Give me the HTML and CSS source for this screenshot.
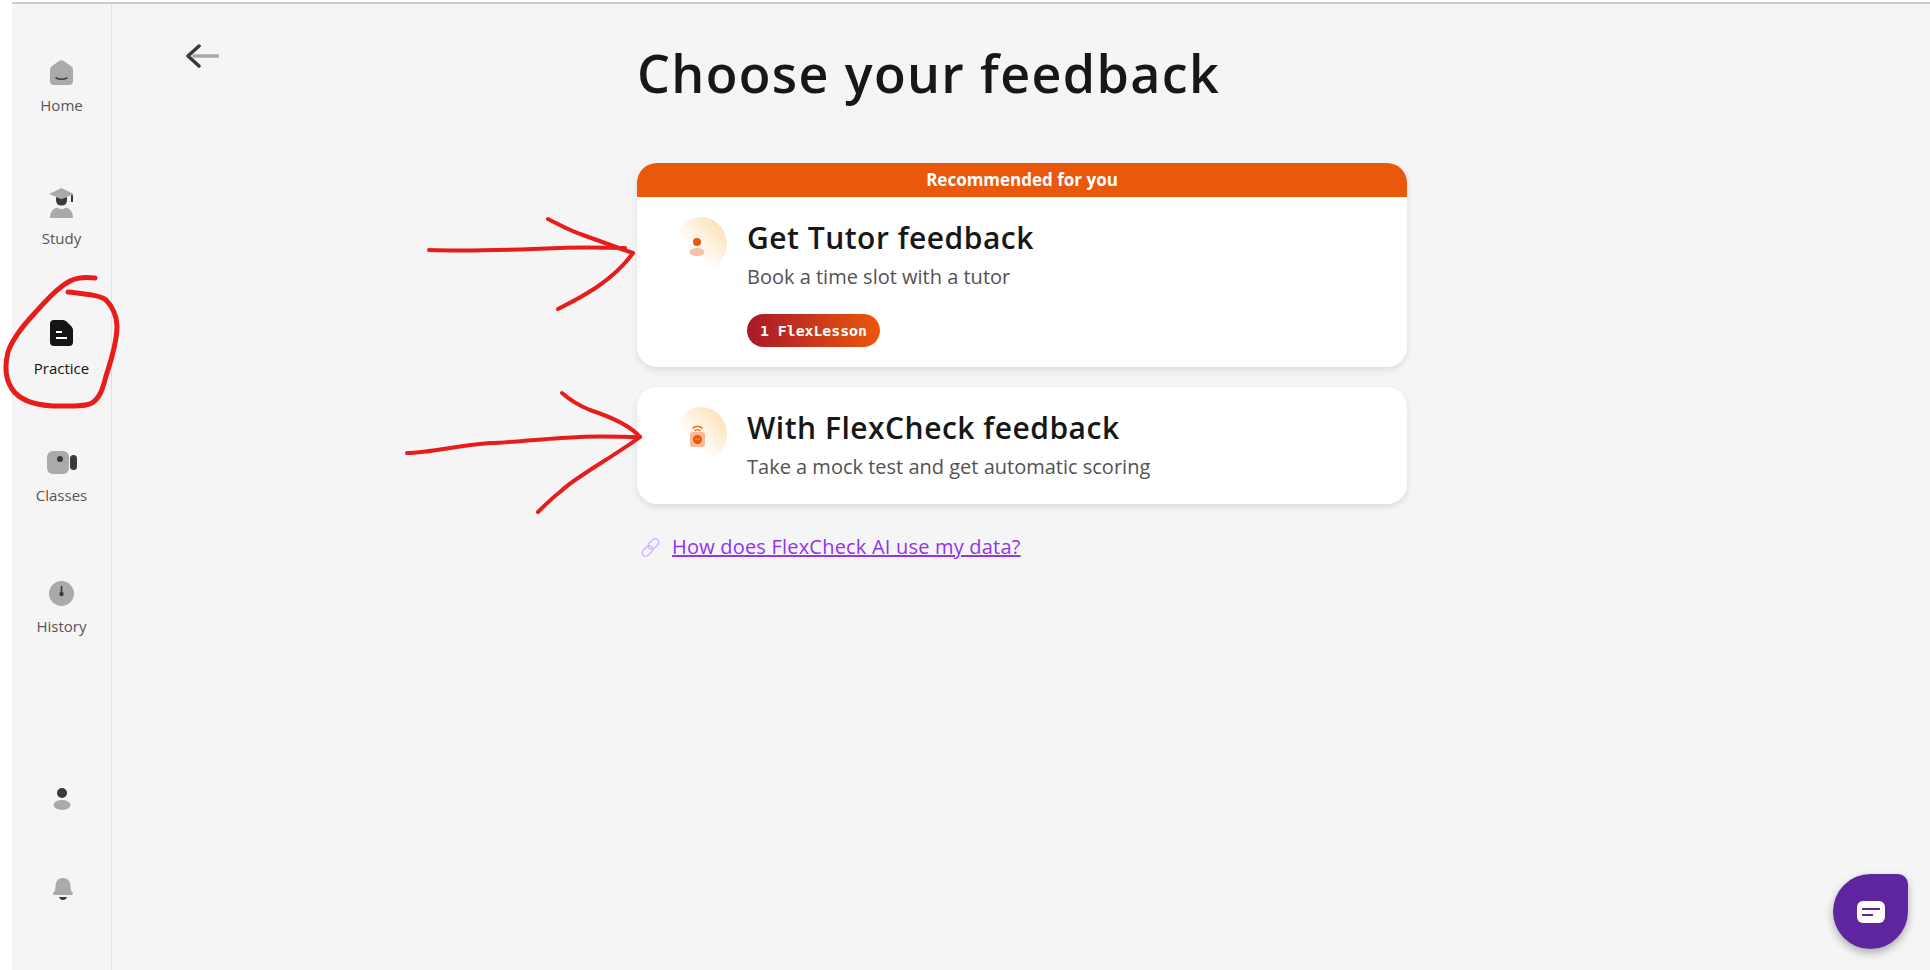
FILE: index.html
```html
<!DOCTYPE html>
<html lang="en">
<head>
    <meta charset="UTF-8">
    <meta name="viewport" content="width=device-width, initial-scale=1.0">
    <title>Choose your feedback</title>
    <link rel="stylesheet" href="styles.css">
</head>
<body>

<div class="app">
    <aside class="sidebar">
        <nav class="nav">
            <a class="nav-item nav-home" href="#">
                <svg class="nav-icon" width="23" height="25" viewBox="0 0 23 25">
                    <path d="M9.5 .8 Q11.5 -.3 13.5 .8 L21 6 Q23 7.4 23 9.5 V21 Q23 25 19 25 H4 Q0 25 0 21 V9.5 Q0 7.4 2 6 Z" fill="#aaa"/>
                    <path d="M6 18 Q11.5 20.5 17 18" fill="none" stroke="#3a3a3a" stroke-width="1.4" stroke-linecap="round"/>
                </svg>
                <span>Home</span>
            </a>
            <a class="nav-item nav-study" href="#">
                <svg class="nav-icon" width="25" height="30" viewBox="0 0 25 30">
                    <path d="M12.5 0 L25 6 L12.5 11 L0 6 Z" fill="#aaa"/>
                    <path d="M7 9 L12.5 11 L18 9 V12 Q18 17.500 12.5 17.500 Q7 17.500 7 12 Z" fill="#3a3a3a"/>
                    <rect x="22" y="7" width="2" height="7" fill="#3a3a3a"/>
                    <path d="M1 30 Q.5 22 8 19.500 Q12.5 22.500 17 19.500 Q24.500 22 24 30 Z" fill="#aaa"/>
                </svg>
                <span>Study</span>
            </a>
            <a class="nav-item nav-active nav-practice" href="#">
                <svg class="nav-icon" width="23" height="26" viewBox="0 0 23 26">
                    <path d="M4 0 H13 Q15 0 16.500 1.500 L21.500 6.500 Q23 8 23 10 V22 Q23 26 19 26 H4 Q0 26 0 22 V4 Q0 0 4 0 Z" fill="#151515"/>
                    <rect x="6" y="11" width="6" height="2" fill="#fff"/>
                    <rect x="6" y="17" width="11" height="2" fill="#fff"/>
                </svg>
                <span>Practice</span>
            </a>
            <a class="nav-item nav-classes" href="#">
                <svg class="nav-icon" width="30" height="23" viewBox="0 0 30 23">
                    <rect width="22" height="23" rx="6" fill="#aaa"/>
                    <circle cx="13" cy="8" r="3" fill="#3a3a3a"/>
                    <rect x="23" y="4" width="7" height="15" rx="3.500" fill="#3a3a3a"/>
                </svg>
                <span>Classes</span>
            </a>
            <a class="nav-item nav-history" href="#">
                <svg class="nav-icon" width="25" height="25" viewBox="0 0 25 25">
                    <circle cx="12.500" cy="12.500" r="12.500" fill="#aaa"/>
                    <rect x="11.700" y="5" width="1.600" height="8" fill="#3a3a3a"/>
                    <circle cx="12.500" cy="13" r="2.200" fill="#3a3a3a"/>
                </svg>
                <span>History</span>
            </a>
        </nav>
        <div class="sidebar-bottom">
            <svg width="18" height="22" viewBox="0 0 18 22">
                <circle cx="9" cy="5" r="5" fill="#3a3a3a"/>
                <ellipse cx="9" cy="17" rx="8.500" ry="5" fill="#aaa"/>
            </svg>
            <svg class="bell" width="20" height="22" viewBox="0 0 20 22">
                <path d="M10 0 Q17 0 17.500 8 L18 13 Q20 14 20 16 Q20 17 18 17 H2 Q0 17 0 16 Q0 14 2 13 L2.500 8 Q3 0 10 0 Z" fill="#aaa"/>
                <path d="M6 19 H14 Q13 22 10 22 Q7 22 6 19 Z" fill="#3a3a3a"/>
            </svg>
        </div>
    </aside>

    <main class="main">
        <a class="back" href="#">
            <svg width="33" height="24" viewBox="0 0 33 24">
                <path d="M8 12 H32" stroke="#aaa" stroke-width="3.500" stroke-linecap="round"/>
                <path d="M13 2 L2 12 L13 22" fill="none" stroke="#3a3a3a" stroke-width="3.500" stroke-linecap="round" stroke-linejoin="round"/>
            </svg>
        </a>

        <div class="content">
            <h1>Choose your feedback</h1>

            <div class="card">
                <div class="card-banner">Recommended for you</div>
                <div class="card-body card-body-tutor">
                    <div class="card-icon">
                        <svg width="52" height="54" viewBox="0 0 52 54">
                            <circle cx="22" cy="25" r="4" fill="#ea580c"/>
                            <ellipse cx="22" cy="35" rx="7.500" ry="4" fill="#f9bfa3"/>
                        </svg>
                    </div>
                    <div class="card-text">
                        <h2>Get Tutor feedback</h2>
                        <p>Book a time slot with a tutor</p>
                        <span class="badge">1 FlexLesson</span>
                    </div>
                </div>
            </div>

            <div class="card">
                <div class="card-body">
                    <div class="card-icon">
                        <svg width="52" height="54" viewBox="0 0 52 54">
                            <path d="M17.500 21.500 A7 7 0 0 1 27.500 21.500 M19.700 24 A4 4 0 0 1 25.300 24" fill="none" stroke="#ea580c" stroke-width="1.400"/>
                            <rect x="15" y="25" width="15" height="15" rx="3" fill="#fbb899"/>
                            <circle cx="22.500" cy="32.500" r="4.500" fill="#ea580c"/>
                            <rect x="20.500" y="31.500" width="1.200" height="1.600" fill="#fbb899"/>
                            <rect x="23.300" y="31.500" width="1.200" height="1.600" fill="#fbb899"/>
                        </svg>
                    </div>
                    <div class="card-text">
                        <h2>With FlexCheck feedback</h2>
                        <p>Take a mock test and get automatic scoring</p>
                    </div>
                </div>
            </div>

            <div class="data-link">
                <svg width="19" height="19" viewBox="0 0 19 19">
                    <g fill="none" stroke="#d8b4fe" stroke-width="1.600">
                        <rect x="6.500" y="2.500" width="12" height="7" rx="3.500" transform="rotate(-45 12.500 6)"/>
                        <rect x=".5" y="9.500" width="12" height="7" rx="3.500" transform="rotate(-45 6.500 13)"/>
                    </g>
                </svg>
                <a href="#">How does FlexCheck AI use my data?</a>
            </div>
        </div>
    </main>
</div>

<!-- marcas vermelhas feitas a mao por cima da tela -->
<svg class="marks" width="1930" height="970" viewBox="0 0 1930 970">
    <g fill="none" stroke="#e91c1c" stroke-width="4" stroke-linecap="round" stroke-linejoin="round">
        <path stroke-width="5" d="M95 278 C85 277 78 277 70 281 C57 288 45 302 33 315 C22 327 12 340 8 352 C4 368 6 380 12 389 C20 401 35 405 53 406 C70 406 84 407 92 403 C100 398 103 388 106 376 C112 358 117 340 117 326 C117 316 112 306 106 300 C100 295 85 294 68 292"/>
        <path d="M429 250 C460 251 510 250 560 248 C585 247 610 248 625 248"/>
        <path d="M548 219 C560 225 570 231 583 235 C600 241 618 248 633 253 C623 267 610 278 597 287 C585 295 570 303 558 309"/>
        <path d="M407 453 C430 453 460 445 490 443 C520 442 550 438 580 437 C600 436 620 437 640 437"/>
        <path d="M562 393 C570 400 580 406 590 410 C605 415 630 425 640 437 C625 448 607 459 590 470 C578 478 568 484 560 492 C552 498 545 505 538 512"/>
    </g>
</svg>

<a class="chat" href="#">
    <svg width="28" height="22" viewBox="0 0 28 22">
        <rect width="28" height="22" rx="6" fill="#fff"/>
        <rect x="5" y="7" width="18" height="2" fill="#5f259f"/>
        <rect x="5" y="13" width="11" height="2" fill="#5f259f"/>
    </svg>
</a>

</body>
</html>
```

FILE: styles.css
```css
html, body {
    height: 100%;
}
body {
    margin: 0;
    padding: 2px 0 0 12px;
    box-sizing: border-box;
    background-color: #fff;
    font-family: "Open Sans", Lato, sans-serif;
    color: #171717;
    overflow: hidden;
}
a {
    text-decoration: none;
    color: inherit;
}
.app {
    display: flex;
    height: 100%;
    border-top: 2px solid #ccc;
    box-sizing: border-box;
    background-color: #f5f5f5;
}
.sidebar {
    flex: 0 0 99px;
    display: flex;
    flex-direction: column;
    border-right: 1px solid #e2e2e2;
    padding: 56px 0 70px;
    box-sizing: content-box;
    height: calc(100% - 126px);
}
.nav {
    display: flex;
    flex-direction: column;
}
.nav-item {
    display: flex;
    flex-direction: column;
    align-items: center;
    gap: 11px;
    margin-bottom: 74px;
    font-size: 15px;
    line-height: 18px;
    color: #555;
}
.nav-study {
    margin-bottom: 73px;
}
.nav-practice {
    gap: 13px;
}
.nav-classes {
    gap: 12px;
    margin-bottom: 77px;
}
.nav-active {
    color: #111;
}
.nav-icon {
    display: block;
}
.sidebar-bottom {
    margin-top: auto;
    display: flex;
    flex-direction: column;
    align-items: center;
    gap: 68px;
}
.bell {
    margin-left: 3px;
}
.main {
    flex: 1;
    display: grid;
    grid-template-columns: 1fr 770px 1fr;
    padding-left: 2px;
}
.back {
    padding: 40px 0 0 72px;
}
.back svg {
    display: block;
}
h1 {
    margin: 0;
    padding-top: 36px;
    height: 70px;
    font-size: 52px;
    line-height: 66px;
    font-weight: 600;
    letter-spacing: 1.35px;
}
.card {
    margin-top: 20px;
    background-color: #fff;
    border-radius: 20px;
    box-shadow: 0 3px 6px rgba(0, 0, 0, 0.1);
    overflow: hidden;
}
h1 + .card {
    margin-top: 53px;
}
.card-banner {
    height: 34px;
    line-height: 34px;
    text-align: center;
    background-color: #ea580c;
    color: #fff;
    font-size: 17px;
    font-weight: 700;
}
.card-body {
    display: flex;
    gap: 20px;
    padding: 20px 28px 23px 38px;
}
.card-body-tutor {
    padding-bottom: 20px;
}
.card-icon {
    flex: 0 0 52px;
    width: 52px;
    height: 54px;
    border-radius: 50%;
    background: linear-gradient(45deg, #fff 35%, #fbdfb0 95%);
}
.card-icon svg {
    display: block;
}
.card-text {
    padding-top: 3px;
}
h2 {
    margin: 0 0 7px;
    font-size: 30px;
    line-height: 36px;
    font-weight: 600;
    letter-spacing: 0.5px;
}
.card-text p {
    margin: 0;
    font-size: 20px;
    line-height: 28px;
    color: #525252;
}
.badge {
    display: inline-block;
    margin-top: 23px;
    padding: 0 13px;
    height: 33px;
    line-height: 33px;
    border-radius: 17px;
    background: linear-gradient(90deg, #a81829, #ea580c);
    color: #fff;
    font-family: "DejaVu Sans Mono", monospace;
    font-size: 14.800px;
    font-weight: 700;
    vertical-align: top;
}
.data-link {
    display: flex;
    align-items: center;
    gap: 12px;
    margin-top: 29px;
    padding-left: 4px;
    font-size: 20px;
    line-height: 28px;
    letter-spacing: 0.2px;
}
.data-link a {
    color: #9333ea;
    text-decoration: underline;
}
.marks {
    position: absolute;
    top: 0;
    left: 0;
    pointer-events: none;
}
.chat {
    position: fixed;
    left: 1833px;
    top: 874px;
    width: 75px;
    height: 75px;
    display: flex;
    align-items: center;
    justify-content: center;
    background-color: #5f259f;
    border-radius: 50% 10px 50% 50%;
    box-shadow: 0 4px 8px rgba(0, 0, 0, 0.3);
}
```
